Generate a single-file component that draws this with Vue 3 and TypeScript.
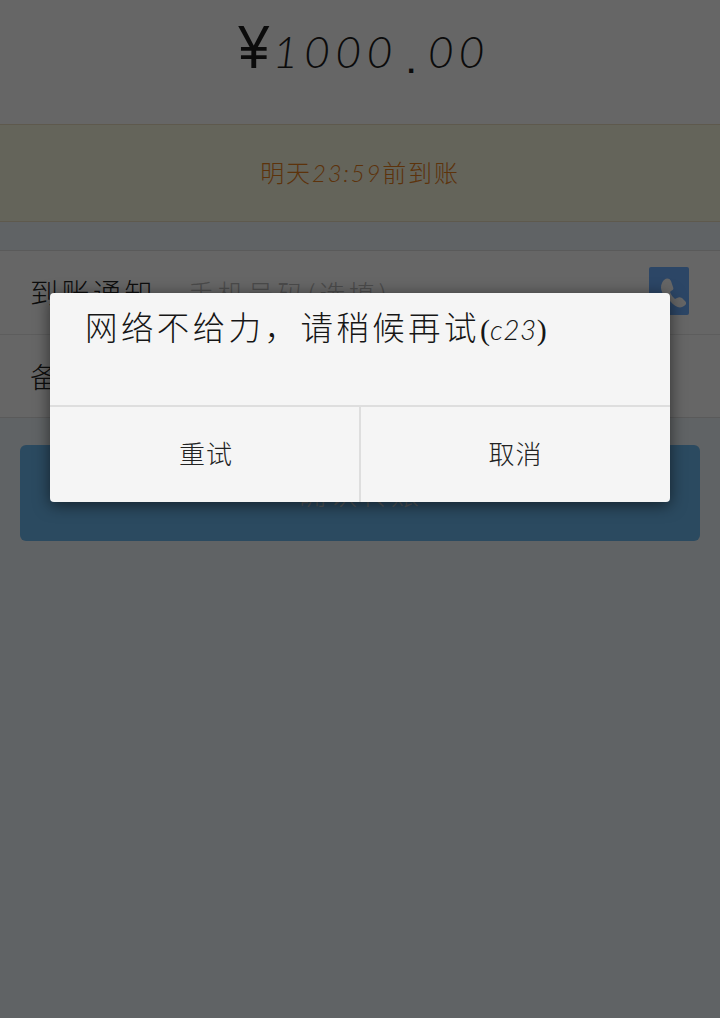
<script setup lang="ts">
const rows = [
  { label: '到账通知', placeholder: '手机号码(选填)', icon: true },
  { label: '备注', placeholder: '', icon: false },
]
</script>

<template>
  <div class="page">
    <header class="amount">
      <span class="yen">¥</span><span class="digits">1000</span><span class="dot">.</span><span class="digits tail">00</span>
    </header>
    <div class="notice"><span class="notice-text">明天<i>23:59</i>前到账</span></div>
    <section class="form">
      <div v-for="row in rows" :key="row.label" class="row">
        <span class="label">{{ row.label }}</span>
        <span class="placeholder">{{ row.placeholder }}</span>
        <span v-if="row.icon" class="phone">
          <svg viewBox="0 0 40 48" width="40" height="48" aria-hidden="true">
            <path d="M13 16c2-5 7-6 9-2l2 6c1 2 0 3-2 4l-1 1c1 3 3 5 5 7l2-1c2-1 3-1 5 0l3 3c2 2 1 4-1 5-4 3-9 1-14-5C14 29 10 22 13 16z" fill="#fff"/>
          </svg>
        </span>
      </div>
    </section>
    <div class="action"><button class="submit">确认转账</button></div>

    <div class="overlay">
      <div class="dialog">
        <div class="message">网络不给力，请稍候再试<span class="paren">(</span><i>c23</i><span class="paren">)</span></div>
        <div class="buttons">
          <button class="left">重试</button>
          <button class="right">取消</button>
        </div>
      </div>
    </div>
  </div>
</template>

<style>
html, body { margin: 0; background: #fff; }
</style>

<style scoped>
.page {
  position: relative;
  width: 720px;
  height: 1018px;
  overflow: hidden;
  background: #f0f8fc;
  font-family: "Noto Sans CJK SC", "Liberation Sans", sans-serif;
  font-weight: 300;
  color: #222;
}
i {
  font-family: Lato, "Liberation Sans", sans-serif;
  font-weight: 300;
  font-style: italic;
}
.amount {
  height: 124px;
  box-sizing: border-box;
  background: #fff;
  padding-top: 21px;
  line-height: 52px;
  text-align: center;
  white-space: nowrap;
  color: #1c1c1c;
}
.yen {
  display: inline-block;
  font-family: "Liberation Sans", sans-serif;
  font-weight: 400;
  font-size: 62px;
  line-height: 52px;
  width: 38px;
  padding-left: 4px;
  text-align: center;
  transform: scaleX(0.9);
}
.digits {
  font-family: Lato, sans-serif;
  font-weight: 300;
  font-style: italic;
  font-size: 44px;
  letter-spacing: 5.8px;
}
.tail { letter-spacing: 5px; }
.dot {
  display: inline-block;
  font-family: "Liberation Sans", sans-serif;
  font-weight: 700;
  font-size: 30px;
  width: 30px;
  margin-left: -2px;
  margin-right: 2px;
  text-align: center;
  vertical-align: -5px;
  line-height: 30px;
}
.notice {
  height: 98px;
  box-sizing: border-box;
  background: #f9fae2;
  border-top: 1px solid #eadfc0;
  border-bottom: 1px solid #eadfc0;
  display: flex;
  justify-content: center;
  color: #e8801c;
  font-size: 24px;
  line-height: 94px;
  letter-spacing: 1.8px;
}
.notice i { font-size: 24px; }
.form {
  margin-top: 28px;
  background: #fff;
  border-top: 1px solid #e2e2e2;
  border-bottom: 1px solid #e2e2e2;
}
.row {
  height: 82.5px;
  display: flex;
  align-items: center;
  padding: 0 31px 0 30px;
  font-size: 28px;
  letter-spacing: 3.5px;
}
.row + .row { border-top: 1px solid #e8e8e8; }
.label { width: 158px; color: #222; }
.placeholder { flex: 1; color: #bbb; font-size: 26px; letter-spacing: 3.8px; }
.phone {
  width: 40px;
  height: 48px;
  margin-bottom: 2px;
  background: #6eaeff;
  border-radius: 2px;
  display: flex;
}
.action { padding: 27px 20px 0; }
.submit {
  display: block;
  width: 100%;
  height: 96px;
  border: 0;
  border-radius: 6px;
  background: #6cb8f0;
  color: #cfd8de;
  font: inherit;
  font-size: 28px;
  letter-spacing: 3px;
}
.overlay {
  position: absolute;
  inset: 0;
  background: rgba(0, 0, 0, 0.6);
}
.dialog {
  position: absolute;
  left: 50px;
  top: 293px;
  width: 620px;
  height: 209px;
  background: #f5f5f5;
  border-radius: 4px;
  box-shadow: 0 3px 16px rgba(0, 0, 0, 0.55);
  display: flex;
  flex-direction: column;
  color: #161616;
}
.message {
  height: 114px;
  box-sizing: border-box;
  padding: 10px 0 0 35px;
  font-size: 32.5px;
  line-height: 46px;
  letter-spacing: 3.4px;
  border-bottom: 2px solid #dedede;
}
.message i { font-size: 28px; letter-spacing: 0.5px; }
.paren { font-family: "Liberation Serif", serif; letter-spacing: 0; font-size: 30px; font-weight: 400; }
.buttons { flex: 1; display: flex; }
.buttons button {
  box-sizing: border-box;
  min-width: 0;
  border: 0;
  padding: 0 0 4px;
  background: transparent;
  font: inherit;
  font-size: 26px;
  letter-spacing: 1px;
  color: #222;
}
.buttons .left { width: 311px; padding-left: 3px; border-right: 2px solid #dedede; }
.buttons .right { width: 309px; }
</style>
